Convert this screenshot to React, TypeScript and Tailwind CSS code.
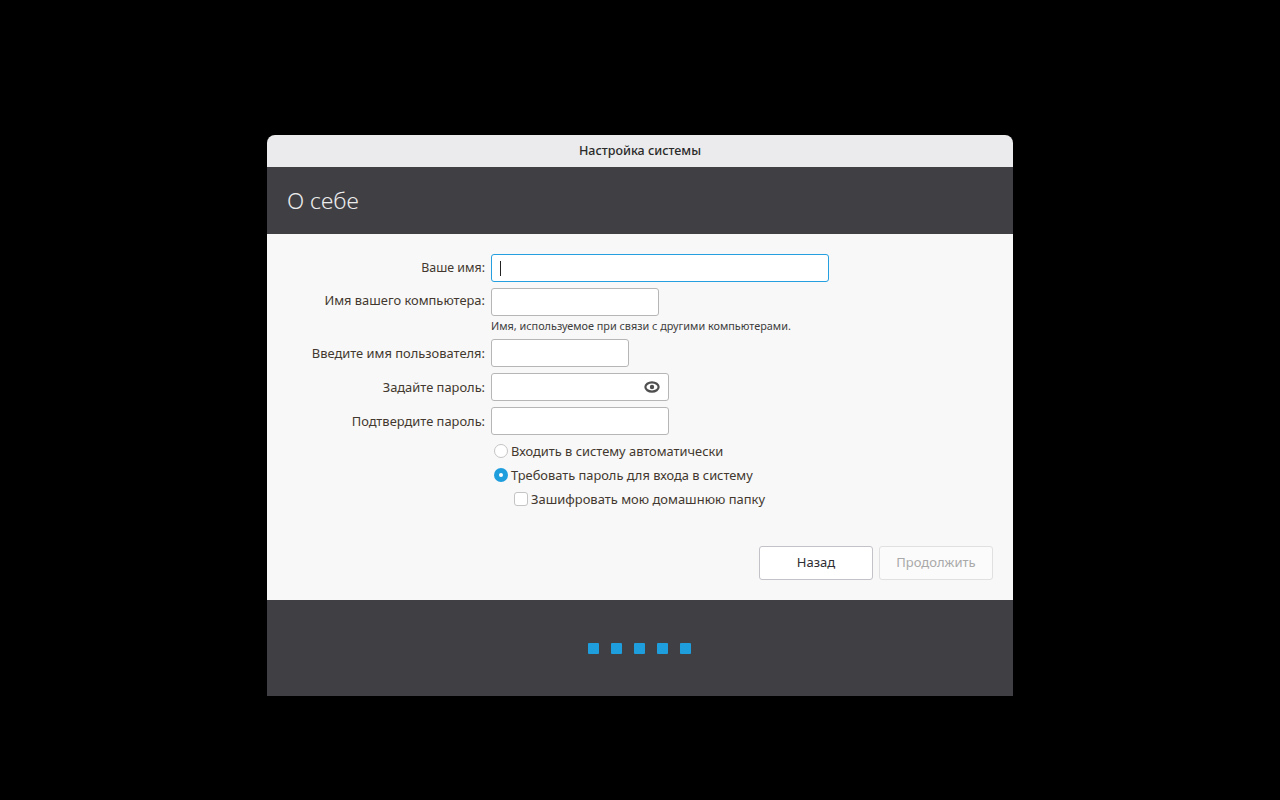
import React from "react";

const font = "font-['Noto_Sans','Open_Sans',sans-serif]";

function Field({ label, width, focused, labelClass = "pt-[1px] text-[12.9px]", children }: { label: string; width: string; focused?: boolean; labelClass?: string; children?: React.ReactNode }) {
  return (
    <div className="flex items-center h-[28px]">
      <div className={`w-[218px] text-right text-[#43382f] leading-none ${labelClass}`}>{label}</div>
      <div
        className={`ml-[6px] h-[28px] ${width} rounded-[3px] bg-white border flex items-center ${
          focused ? "border-[#259fdf]" : "border-[#b6b6b6]"
        }`}
      >
        {children}
      </div>
    </div>
  );
}

function Option({ label, checked }: { label: string; checked?: boolean }) {
  return (
    <div className="flex items-center h-[24px] pl-[227px]">
      {checked ? (
        <span className="w-[14px] h-[14px] rounded-full bg-[#1f9ede] flex items-center justify-center">
          <span className="w-[4px] h-[4px] rounded-full bg-white" />
        </span>
      ) : (
        <span className="w-[14px] h-[14px] rounded-full bg-white border border-[#c4c4c4]" />
      )}
      <span className="ml-[3px] text-[12.85px] text-[#43382f] leading-none">{label}</span>
    </div>
  );
}

export default function App() {
  return (
    <div className={`w-[1280px] h-[800px] bg-black flex items-center justify-center ${font}`}>
      <div className="w-[746px] h-[561px] flex flex-col mt-[31px]">
        <div className="h-[32px] bg-[#ebebed] rounded-t-[8px] flex items-center justify-center text-[12.5px] font-medium text-[#2a2a2a] pt-[1px]">
          Настройка системы
        </div>
        <div className="h-[67px] bg-[#403f44] flex items-center pl-[20px] pt-[1px] text-[22.8px] font-light text-[#ececec]">О себе</div>
        <div className="h-[366px] bg-[#f8f8f8] flex flex-col pt-[20px]">
          <Field label="Ваше имя:" width="w-[338px]" focused labelClass="pt-[1px] text-[12.4px]">
            <span className="ml-[8px] w-px h-[15px] bg-[#222]" />
          </Field>
          <div className="h-[6px]" />
          <Field label="Имя вашего компьютера:" width="w-[168px]" labelClass="pb-[4px] text-[12.9px]" />
          <div className="h-[23px] pl-[224px] pt-[3px] text-[10.85px] text-[#3d3d3d] leading-[14px]">
            Имя, используемое при связи с другими компьютерами.
          </div>
          <Field label="Введите имя пользователя:" width="w-[138px]" />
          <div className="h-[6px]" />
          <Field label="Задайте пароль:" width="w-[178px]">
            <svg className="ml-auto mr-[8px]" width="16" height="16" viewBox="0 0 16 16" fill="none">
              <ellipse cx="8" cy="8" rx="6.6" ry="4.6" stroke="#4f4f4f" strokeWidth="2.2" />
              <circle cx="8" cy="8" r="2.2" fill="#4f4f4f" />
            </svg>
          </Field>
          <div className="h-[6px]" />
          <Field label="Подтвердите пароль:" width="w-[178px]" />
          <div className="h-[4px]" />
          <Option label="Входить в систему автоматически" />
          <Option label="Требовать пароль для входа в систему" checked />
          <div className="flex items-center h-[24px] pl-[247px]">
            <span className="w-[14px] h-[14px] rounded-[3px] bg-white border border-[#c4c4c4]" />
            <span className="ml-[3px] text-[12.95px] text-[#43382f] leading-none">Зашифровать мою домашнюю папку</span>
          </div>
          <div className="mt-[35px] flex justify-end gap-[6px] pr-[20px]">
            <div className="w-[114px] h-[34px] rounded-[3px] bg-white border border-[#c2c2c8] flex items-center justify-center text-[13px] text-[#2e2e33]">
              Назад
            </div>
            <div className="w-[114px] h-[34px] rounded-[3px] bg-[#fbfbfb] border border-[#e0e0e0] flex items-center justify-center text-[13px] text-[#a9a9a9]">
              Продолжить
            </div>
          </div>
        </div>
        <div className="h-[96px] bg-[#403f44] flex items-center justify-center gap-[12px] pr-[2px]">
          <span className="w-[11px] h-[11px] rounded-[1px] bg-[#1f9ede]" />
          <span className="w-[11px] h-[11px] rounded-[1px] bg-[#1f9ede]" />
          <span className="w-[11px] h-[11px] rounded-[1px] bg-[#1f9ede]" />
          <span className="w-[11px] h-[11px] rounded-[1px] bg-[#1f9ede]" />
          <span className="w-[11px] h-[11px] rounded-[1px] bg-[#1f9ede]" />
        </div>
      </div>
    </div>
  );
}
